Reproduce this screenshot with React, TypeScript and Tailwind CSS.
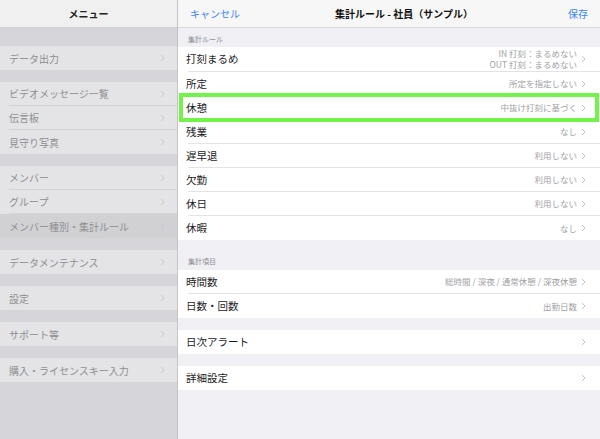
import type { ReactNode } from 'react'

const FONT = { fontFamily: '"Noto Sans CJK JP", "Noto Sans", sans-serif' }

const Chevron = ({ color = '#c4c4c8' }: { color?: string }) => (
  <svg width="5" height="8" viewBox="0 0 5 8" className="shrink-0">
    <polyline points="1,1 4,4 1,7" fill="none" stroke={color} strokeWidth="1" />
  </svg>
)

type SideItem = { label: string; active?: boolean }

const SIDE_GROUPS: SideItem[][] = [
  [{ label: 'データ出力' }],
  [{ label: 'ビデオメッセージ一覧' }, { label: '伝言板' }, { label: '見守り写真' }],
  [{ label: 'メンバー' }, { label: 'グループ' }, { label: 'メンバー種別・集計ルール', active: true }],
  [{ label: 'データメンテナンス' }],
  [{ label: '設定' }],
  [{ label: 'サポート等' }],
  [{ label: '購入・ライセンスキー入力' }],
]

function Sidebar() {
  return (
    <div className="w-[178px] shrink-0 bg-[#d5d5d9] border-r border-[#c4c4c8] flex flex-col">
      <div className="h-[28px] bg-[#f0f0f0] border-b border-[#cfcfd2] flex items-center justify-center text-[10px] font-bold text-[#222]">
        メニュー
      </div>
      <div className="pt-[18px] flex flex-col gap-[12px]">
        {SIDE_GROUPS.map((g, gi) => (
          <div key={gi} className="bg-[#e4e4e6]">
            {g.map((it, i) => (
              <div key={it.label} className={`h-[24px] pl-[9px] ${it.active ? 'bg-[#d1d1d4]' : ''}`}>
                <div
                  className={`h-full flex items-center justify-between pr-[12px] text-[10px] text-[#8e8e90] ${
                    i < g.length - 1 ? 'border-b border-[#d3d3d6]' : ''
                  }`}
                >
                  <span>{it.label}</span>
                  <Chevron color="#c9c9cc" />
                </div>
              </div>
            ))}
          </div>
        ))}
      </div>
    </div>
  )
}

type Row = { label: string; detail?: ReactNode; highlight?: boolean; tall?: boolean }

const RULES: Row[] = [
  {
    label: '打刻まるめ',
    tall: true,
    detail: (
      <span className="flex flex-col items-end leading-[11px]">
        <span>IN 打刻：まるめない</span>
        <span>OUT 打刻：まるめない</span>
      </span>
    ),
  },
  { label: '所定', detail: '所定を指定しない' },
  { label: '休憩', detail: '中抜け打刻に基づく', highlight: true },
  { label: '残業', detail: 'なし' },
  { label: '遅早退', detail: '利用しない' },
  { label: '欠勤', detail: '利用しない' },
  { label: '休日', detail: '利用しない' },
  { label: '休暇', detail: 'なし' },
]

const ITEMS: Row[] = [
  { label: '時間数', detail: '総時間 / 深夜 / 通常休憩 / 深夜休憩' },
  { label: '日数・回数', detail: '出勤日数' },
]

function Group({ rows }: { rows: Row[] }) {
  return (
    <div className="bg-white">
      {rows.map((r, i) => (
        <div key={r.label} className={`relative pl-[10px] ${r.tall ? 'h-[25px]' : 'h-[24px]'}`}>
          <div
            className={`h-full flex items-center justify-between pr-[14px] ${
              i < rows.length - 1 ? 'border-b border-[#e3e3e6]' : ''
            }`}
          >
            <span className="text-[10.5px] text-[#1c1c1e] -ml-[2px]">{r.label}</span>
            <span className="flex items-center gap-[4px] text-[8.5px] text-[#a2a2a6]">
              {r.detail}
              <Chevron />
            </span>
          </div>
          {r.highlight && (
            <div className="absolute left-[1px] right-[1px] -top-[3px] -bottom-[2px] border-[4px] border-[#73f24b] pointer-events-none" />
          )}
        </div>
      ))}
    </div>
  )
}

export default function App() {
  return (
    <div className="w-[600px] h-[439px] flex overflow-hidden bg-[#efeff4]" style={FONT}>
      <Sidebar />
      <div className="flex-1 flex flex-col bg-[#efeff4]">
        <div className="h-[28px] bg-[#f7f7f7] border-b border-[#d8d8db] flex items-center justify-between px-[12px] text-[10px]">
          <span className="text-[#3b87f0]">キャンセル</span>
          <span className="font-bold text-[#111]">集計ルール - 社員（サンプル）</span>
          <span className="text-[#3b87f0]">保存</span>
        </div>
        <div className="h-[19px] flex items-end pl-[10px] pb-[3px] text-[7px] text-[#8e8e93]">集計ルール</div>
        <Group rows={RULES} />
        <div className="h-[30px] flex items-end pl-[10px] pb-[4px] text-[7px] text-[#8e8e93]">集計項目</div>
        <Group rows={ITEMS} />
        <div className="h-[12px]" />
        <Group rows={[{ label: '日次アラート' }]} />
        <div className="h-[12px]" />
        <Group rows={[{ label: '詳細設定' }]} />
      </div>
    </div>
  )
}
